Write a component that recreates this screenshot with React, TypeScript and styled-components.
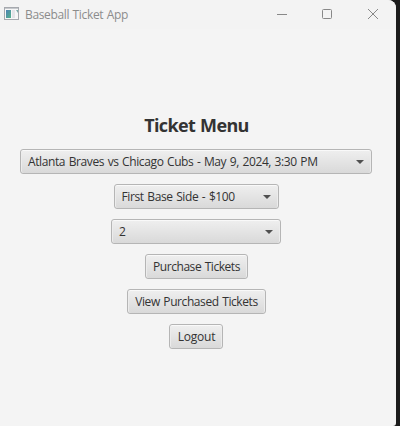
import React from 'react';
import styled, { createGlobalStyle } from 'styled-components';

const GlobalStyle = createGlobalStyle`
  * { box-sizing: border-box; }
  body { margin: 0; background: #1c1c1c; overflow: hidden; }
`;

const AppWindow = styled.div`
  width: 396px;
  height: 426px;
  background: #f4f4f4;
  border-top-right-radius: 8px;
  border-bottom-right-radius: 3px;
  overflow: hidden;
  font-family: 'Open Sans', 'Noto Sans', sans-serif;
  color: #333;
`;

const TitleBar = styled.header`
  display: flex;
  align-items: center;
  height: 29px;
  padding: 0 17px 0 4px;
  background: #f3f3f3;
`;

const Caption = styled.span`
  flex: 1;
  margin-left: 6px;
  padding-top: 1px;
  font-size: 12px;
  line-height: 16px;
  letter-spacing: -0.35px;
  word-spacing: 0.7px;
  color: #8c8c8c;
  white-space: nowrap;
`;

const WindowControls = styled.div`
  display: flex;
  gap: 34px;
  padding-bottom: 1px;
`;

const Menu = styled.main`
  display: flex;
  flex-direction: column;
  align-items: center;
  gap: 10px;
  width: 392px;
  padding-top: 84px;
`;

const Heading = styled.h1`
  margin: 0;
  height: 26px;
  padding-left: 1px;
  font-size: 18px;
  line-height: 25px;
  font-weight: 700;
  letter-spacing: -0.65px;
  word-spacing: 1px;
  white-space: nowrap;
`;

const Control = styled.button<{ $width: number; $tracking?: number }>`
  display: flex;
  align-items: center;
  justify-content: center;
  width: ${(p) => p.$width}px;
  height: 25px;
  padding: 0 7px;
  border: 1px solid #b5b5b5;
  border-radius: 3px;
  background: linear-gradient(#efefef, #d9d9d9);
  box-shadow: inset 0 1px 0 #f9f9f9, inset 1px 0 0 #ececec, inset -1px 0 0 #ececec;
  font-family: inherit;
  font-size: 12px;
  line-height: 18px;
  letter-spacing: ${(p) => p.$tracking ?? 0}px;
  word-spacing: 0.8px;
  color: #333;
  white-space: nowrap;
`;

const Select = styled(Control)`
  justify-content: space-between;
`;

const Button = styled(Control)`
  padding: 0 6px 0 7px;
`;

const Arrow = () => (
  <svg width="8" height="4" viewBox="0 0 8 4">
    <path d="M0 0H8L4 4Z" fill="#505050" />
  </svg>
);

const AppIcon = () => (
  <svg width="15" height="15" viewBox="0 0 15 15">
    <defs>
      <linearGradient id="pane" x1="0" y1="0" x2="1" y2="1">
        <stop offset="0" stopColor="#4f83b5" />
        <stop offset="1" stopColor="#55b38b" />
      </linearGradient>
    </defs>
    <rect x=".5" y=".5" width="14" height="12" fill="#f7f7f7" stroke="#a6a9ae" />
    <path d="M1 1.5H14" stroke="#c5c8cc" />
    <rect x="2" y="3" width="5" height="8" fill="url(#pane)" />
    <rect x="8" y="3" width="3" height="8" fill="#e4e4e8" />
    <path d="M12 3H14V6Z" fill="#79aaa8" />
  </svg>
);

export default function App() {
  return (
    <>
      <GlobalStyle />
      <AppWindow>
        <TitleBar>
          <AppIcon />
          <Caption>Baseball Ticket App</Caption>
          <WindowControls>
            <svg width="12" height="12" viewBox="0 0 12 12">
              <path d="M2 6.5H12" stroke="#888" />
            </svg>
            <svg width="12" height="12" viewBox="0 0 12 12">
              <rect x="1.5" y="1.5" width="9" height="9" rx="1" fill="none" stroke="#888" />
            </svg>
            <svg width="12" height="12" viewBox="0 0 12 12">
              <path d="M1 1L11 11M11 1L1 11" stroke="#888" />
            </svg>
          </WindowControls>
        </TitleBar>
        <Menu>
          <Heading>Ticket Menu</Heading>
          <Select $width={352} $tracking={-0.39}>
            Atlanta Braves vs Chicago Cubs - May 9, 2024, 3:30 PM
            <Arrow />
          </Select>
          <Select $width={165} $tracking={-0.38}>
            First Base Side - $100
            <Arrow />
          </Select>
          <Select $width={170}>
            2
            <Arrow />
          </Select>
          <Button $width={103} $tracking={-0.45}>Purchase Tickets</Button>
          <Button $width={139} $tracking={-0.41}>View Purchased Tickets</Button>
          <Button $width={54} $tracking={-0.2}>Logout</Button>
        </Menu>
      </AppWindow>
    </>
  );
}
